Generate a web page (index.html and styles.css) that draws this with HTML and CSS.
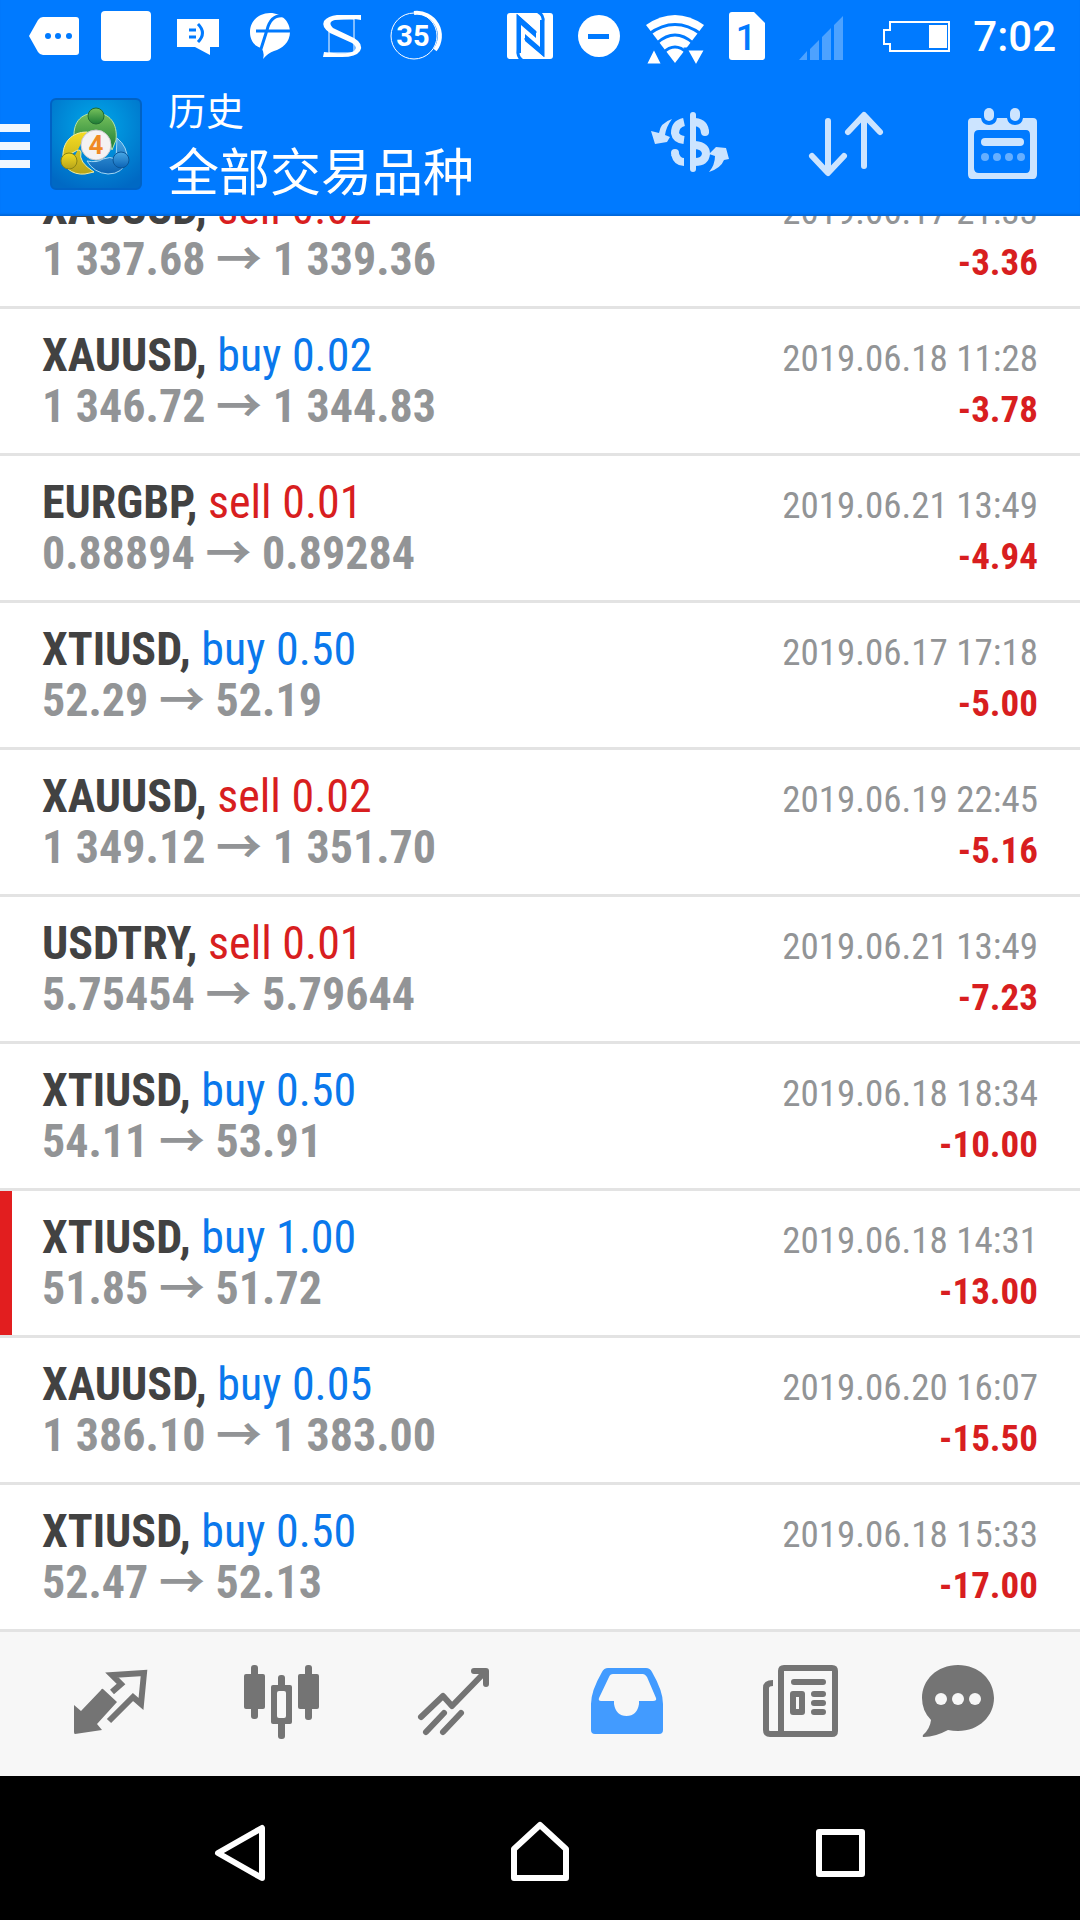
FILE: index.html
```html
<!DOCTYPE html>
<html lang="zh-CN">

<head>
    <meta charset="UTF-8">
    <meta name="viewport" content="width=device-width, initial-scale=1.0">
    <title>历史</title>

    <link rel="stylesheet" href="styles.css">
</head>

<body>
    <header class="header">
        <div class="status-bar">
            <div class="status-group">
                <!-- tag -->
                <svg class="status-icon" viewBox="0 0 72 72">
                    <path d="M11 36 20 20Q22 17 25 17H58Q61 17 61 20V52Q61 55 58 55H25Q22 55 20 52Z" />
                    <g class="cut"><circle cx="30" cy="36" r="3" /><circle cx="40" cy="36" r="3" /><circle cx="51" cy="36" r="3" /></g>
                </svg>
                <svg class="status-icon" viewBox="0 0 72 72">
                    <rect x="11" y="11" width="50" height="50" rx="4" />
                </svg>
                <!-- message -->
                <svg class="status-icon" viewBox="0 0 72 72">
                    <path d="M15 19H57V47H48V55L33 47H15Z" />
                    <path class="cut-line" d="M27 30H34M27 37H34M36 24Q45 33 36 42" />
                </svg>
                <svg class="status-icon" viewBox="0 0 72 72">
                    <path d="M36 13C48 13 56 22 56 32C56 42 48 49 40 51Q34 53 29 59Q31 52 27 48C20 46 16 40 16 32C16 21 25 13 36 13Z" />
                    <path class="cut-line" d="M50 16Q37 14 33 30L26 52M22 31H56" />
                </svg>
                <!-- s -->
                <svg class="status-icon" viewBox="0 0 72 72">
                    <path class="thin" d="M23 19H48V53H23Z" />
                    <path d="M55 15V20Q47 18 29 20Q21 22 27 28L48 38Q58 44 54 51Q50 57 36 57H17L18 52Q42 55 48 51Q52 47 46 43L24 33Q15 27 18 21Q22 16 31 15Z" />
                </svg>
                <svg class="status-icon" viewBox="0 0 72 72">
                    <circle class="thin" cx="36" cy="36" r="23" />
                    <path class="ring" d="M36 13A23 23 0 0 1 57 50" />
                    <text x="35" y="46" text-anchor="middle" class="ring-text">35</text>
                </svg>
            </div>
            <div class="status-group">
                <!-- nfc -->
                <svg class="status-icon" viewBox="0 0 72 72">
                    <rect x="13" y="13" width="46" height="46" rx="3" />
                    <path class="cut-line" d="M28 60Q23 57 24 49V17L42 33M44 12Q50 15 49 22V54L31 38" />
                    <path class="cut" d="M23 14 42 31V38L27 25V53H23ZM50 57 31 41V34L46 47V20H50Z" />
                </svg>
                <svg class="status-icon" viewBox="0 0 72 72">
                    <circle cx="33" cy="36" r="21" />
                    <path class="cut" d="M22 34H43V39H22Z" />
                </svg>
                <!-- wifi -->
                <svg class="status-icon" viewBox="0 0 72 72">
                    <path d="M37 63 8 25Q37 5 66 25Z" />
                    <path class="cut-line" d="M11 34Q37 15 63 34M19 43Q37 27 55 43M25 53Q37 41 49 53" />
                    <path class="tri" d="M7 65 16 47 25 65ZM48 49H68L58 67Z" />
                </svg>
                <svg class="status-icon" viewBox="0 0 72 72">
                    <path d="M22 12H44L55 23V57Q55 60 52 60H22Q19 60 19 57V15Q19 12 22 12Z" />
                    <text x="36" y="50" text-anchor="middle" class="sim-text">1</text>
                </svg>
                <svg class="status-icon signal" viewBox="0 0 72 72">
                    <path d="M17 60 25 51V60ZM28 49 37 40V60H28ZM40 37 49 28V60H40ZM52 25 61 16V60H52Z" />
                </svg>
                <!-- battery -->
                <svg class="battery" viewBox="0 0 72 36">
                    <path class="battery-line" d="M10 4H69V33H10V26H4V12H10Z" />
                    <rect x="49" y="7" width="18" height="23" />
                </svg>
                <span class="time">7:02</span>
            </div>
        </div>

        <div class="app-bar">
            <button class="menu" aria-label="菜单"><span></span><span></span><span></span></button>
            <svg class="logo" viewBox="0 0 92 92">
                <defs>
                    <radialGradient id="tile" cx="50%" cy="30%" r="75%">
                        <stop offset="0" stop-color="#00a9ea" />
                        <stop offset="1" stop-color="#0069c4" />
                    </radialGradient>
                    <linearGradient id="green" x2="0" y2="1">
                        <stop offset="0" stop-color="#78c25c" />
                        <stop offset="1" stop-color="#1d7c35" />
                    </linearGradient>
                    <linearGradient id="yellow" x2="0" y2="1">
                        <stop offset="0" stop-color="#f6dc20" />
                        <stop offset="1" stop-color="#b5a31b" />
                    </linearGradient>
                    <linearGradient id="blue" x2="0" y2="1">
                        <stop offset="0" stop-color="#4aa9e6" />
                        <stop offset="1" stop-color="#0a62b4" />
                    </linearGradient>
                </defs>
                <rect x="1" y="1" width="90" height="90" rx="5" fill="url(#tile)" stroke="#0062c4" stroke-width="2" />
                <path d="M24 40C23 22 33 15 46 15S68 25 66 42L62 52Q59 40 53 34H38Z" fill="url(#green)" stroke="#b9e3a6" />
                <path d="M37 34C22 34 12 44 13 60L24 54Q30 50 31 54Q28 64 44 74L35 76Q25 77 18 71" fill="url(#yellow)" stroke="#f5eda0" />
                <path d="M67 40Q78 49 77 62Q73 76 58 76Q44 75 37 63Q47 65 53 61Q60 58 66 61Z" fill="url(#blue)" stroke="#a4d8f5" />
                <circle cx="46" cy="18" r="8" fill="url(#green)" stroke="#206b32" />
                <circle cx="19" cy="63" r="8" fill="url(#yellow)" stroke="#8a8414" />
                <circle cx="71" cy="62" r="8" fill="url(#blue)" stroke="#0b5597" />
                <circle cx="46" cy="47" r="15" fill="#f4f2f3" stroke="#c9c9cc" />
                <text x="46" y="56" text-anchor="middle" class="logo-text">4</text>
            </svg>
            <div class="titles">
                <h1>历史</h1>
                <p>全部交易品种</p>
            </div>
            <div class="actions">
                <button aria-label="货币">
                    <svg viewBox="0 0 84 84">
                        <path class="bar-line" d="M45 13V67" />
                        <path class="coin" d="M36 20Q27 22 27 31Q28 37 36 38M27 52Q29 60 36 60M47 20Q57 21 57 31M47 43Q58 44 58 52Q57 60 47 60" />
                        <circle class="bar-fill" cx="57" cy="30" r="4" />
                        <circle class="bar-fill" cx="27" cy="51" r="4" />
                        <path class="bar-fill" d="M24 17Q12 21 11 31L3 29 7 42 19 40 22 35 17 33Q18 25 24 17ZM61 70Q73 66 76 58L81 57 78 46 68 45 61 52 67 54Q67 63 61 70Z" />
                    </svg>
                </button>
                <button aria-label="排序">
                    <svg viewBox="0 0 84 84">
                        <path class="bar-line" d="M24 19V70M8 54 24 71 40 54M60 64V14M44 30 60 13 76 30" />
                    </svg>
                </button>
                <button aria-label="日期">
                    <svg viewBox="0 0 84 84">
                        <path class="bar-fill" fill-rule="evenodd" d="M12 16H21Q22 23 29 23T37 16H47Q48 23 55 23T63 16H73Q77 16 77 20V72Q77 77 73 77H12Q8 77 8 72V20Q8 16 12 16ZM19 28Q14 28 14 33V66Q14 71 19 71H66Q70 71 70 66V33Q70 28 66 28Z" />
                        <rect class="bar-fill" x="24" y="6" width="10" height="13" rx="5" />
                        <rect class="bar-fill" x="50" y="6" width="10" height="13" rx="5" />
                        <rect class="bar-fill" x="21" y="36" width="43" height="8" rx="4" />
                        <g class="dots"><circle cx="25" cy="55" r="4" /><circle cx="37" cy="55" r="4" /><circle cx="49" cy="55" r="4" /><circle cx="61" cy="55" r="4" /></g>
                    </svg>
                </button>
            </div>
        </div>
    </header>

    <!-- closed deals, scrolled down to the last one -->
    <ul class="deals">
        <li class="deal">
            <div class="line"><span><b>XAUUSD,</b> <span class="sell">sell 0.02</span></span><time>2019.06.17 21:33</time></div>
            <div class="line price"><span>1 337.68 <i>→</i> 1 339.36</span><span class="profit">-3.36</span></div>
        </li>
        <li class="deal">
            <div class="line"><span><b>XAUUSD,</b> <span class="buy">buy 0.02</span></span><time>2019.06.18 11:28</time></div>
            <div class="line price"><span>1 346.72 <i>→</i> 1 344.83</span><span class="profit">-3.78</span></div>
        </li>
        <li class="deal">
            <div class="line"><span><b>EURGBP,</b> <span class="sell">sell 0.01</span></span><time>2019.06.21 13:49</time></div>
            <div class="line price"><span>0.88894 <i>→</i> 0.89284</span><span class="profit">-4.94</span></div>
        </li>
        <li class="deal">
            <div class="line"><span><b>XTIUSD,</b> <span class="buy">buy 0.50</span></span><time>2019.06.17 17:18</time></div>
            <div class="line price"><span>52.29 <i>→</i> 52.19</span><span class="profit">-5.00</span></div>
        </li>
        <li class="deal">
            <div class="line"><span><b>XAUUSD,</b> <span class="sell">sell 0.02</span></span><time>2019.06.19 22:45</time></div>
            <div class="line price"><span>1 349.12 <i>→</i> 1 351.70</span><span class="profit">-5.16</span></div>
        </li>
        <li class="deal">
            <div class="line"><span><b>USDTRY,</b> <span class="sell">sell 0.01</span></span><time>2019.06.21 13:49</time></div>
            <div class="line price"><span>5.75454 <i>→</i> 5.79644</span><span class="profit">-7.23</span></div>
        </li>
        <li class="deal">
            <div class="line"><span><b>XTIUSD,</b> <span class="buy">buy 0.50</span></span><time>2019.06.18 18:34</time></div>
            <div class="line price"><span>54.11 <i>→</i> 53.91</span><span class="profit">-10.00</span></div>
        </li>
        <li class="deal marked">
            <div class="line"><span><b>XTIUSD,</b> <span class="buy">buy 1.00</span></span><time>2019.06.18 14:31</time></div>
            <div class="line price"><span>51.85 <i>→</i> 51.72</span><span class="profit">-13.00</span></div>
        </li>
        <li class="deal">
            <div class="line"><span><b>XAUUSD,</b> <span class="buy">buy 0.05</span></span><time>2019.06.20 16:07</time></div>
            <div class="line price"><span>1 386.10 <i>→</i> 1 383.00</span><span class="profit">-15.50</span></div>
        </li>
        <li class="deal">
            <div class="line"><span><b>XTIUSD,</b> <span class="buy">buy 0.50</span></span><time>2019.06.18 15:33</time></div>
            <div class="line price"><span>52.47 <i>→</i> 52.13</span><span class="profit">-17.00</span></div>
        </li>
    </ul>

    <nav class="tabs">
        <button aria-label="行情">
            <svg viewBox="0 0 96 96">
                <path d="M41 33 55 46 35 68 40 74 13 78Q12 78 12 76V49L19 55 39 34Q40 32 41 33Z" />
                <path class="stroke" d="M50 36 59 28 50 19 82 17 79 48 71 41 47 65" />
            </svg>
        </button>
        <button aria-label="图表">
            <svg viewBox="0 0 96 96">
                <rect x="10" y="18" width="21" height="35" rx="2" />
                <rect x="17" y="9" width="7" height="54" rx="3" />
                <rect x="64" y="18" width="21" height="35" rx="2" />
                <rect x="71" y="9" width="7" height="55" rx="3" />
                <rect x="44" y="19" width="7" height="64" rx="3" />
                <rect x="37" y="29" width="21" height="39" rx="2" />
                <rect class="hole" x="43" y="35" width="9" height="27" rx="2" />
            </svg>
        </button>
        <button aria-label="交易">
            <svg viewBox="0 0 96 96">
                <path class="stroke trend" d="M15 61 37 40 46 50 79 16M68 15H80V28M38 57 20 76M55 57 37 76" />
            </svg>
        </button>
        <button class="active" aria-label="历史">
            <svg viewBox="0 0 96 96">
                <path fill-rule="evenodd" d="M30 12H68Q72 12 74 16Q85 35 85 48V74Q85 78 81 78H17Q13 78 13 74V48Q13 35 24 16Q26 12 30 12ZM35 18Q32 18 31 21L21 42Q20 45 23 45H36V48Q38 60 48.500 60T61 48V45H75Q79 45 78 42L69 21Q67 18 65 18Z" />
            </svg>
        </button>
        <button aria-label="新闻">
            <svg viewBox="0 0 96 96">
                <path class="stroke" d="M34 12H82Q85 12 85 15V75Q85 78 82 78H20Q16 78 16 74V32Q16 27 23 27M31 78V15Q31 12 34 12" />
                <path class="stroke round" d="M44 26H73M64 38H73M64 47H73M64 56H73" />
                <rect x="40" y="35" width="15" height="24" rx="3" />
                <rect class="hole" x="46" y="41" width="3" height="12" />
            </svg>
        </button>
        <button aria-label="消息">
            <svg viewBox="0 0 96 96">
                <path d="M36 9C57 9 72 24 72 42S57 75 36 75Q31 75 26 74Q13 81 2 81Q0 81 1 79Q8 73 9 64Q0 55 0 42C0 24 15 9 36 9Z" />
                <circle class="hole" cx="19" cy="43" r="6" />
                <circle class="hole" cx="36" cy="43" r="6" />
                <circle class="hole" cx="53" cy="43" r="6" />
            </svg>
        </button>
    </nav>

    <div class="system-bar">
        <button aria-label="返回"><svg viewBox="0 0 72 72"><path d="M14 41 58 16V66Z" /></svg></button>
        <button aria-label="主屏幕"><svg viewBox="0 0 72 72"><path d="M10 66V37L36 13 62 37V66Z" /></svg></button>
        <button aria-label="最近"><svg viewBox="0 0 72 72"><path d="M15 20H58V62H15Z" /></svg></button>
    </div>
</body>

</html>
```
FILE: styles.css
```css
* {
    box-sizing: border-box;
    margin: 0;
    padding: 0;
}

body {
    display: flex;
    flex-direction: column;
    height: 100vh;
    background-color: #fff;
    font-family: "Roboto Condensed", Roboto, "Noto Sans CJK SC", sans-serif;
}

button {
    border: none;
    background: none;
    cursor: pointer;
}

svg {
    display: block;
}

/* header */
.header {
    flex: none;
    background-color: #007aff;
    color: #fff;
    box-shadow: inset 0 -3px 2px -1px #0068db;
}

.status-bar {
    display: flex;
    justify-content: space-between;
    height: 72px;
    padding: 0 24px 0 18px;
}

.status-group {
    display: flex;
    align-items: center;
}

.status-icon {
    width: 72px;
    height: 72px;
    fill: #fff;
}

.cut {
    fill: #007aff;
}

.cut-line {
    fill: none;
    stroke: #007aff;
    stroke-width: 3;
}

.thin {
    fill: none;
    stroke: #fff;
    stroke-width: 1;
}

.ring {
    fill: none;
    stroke: #fff;
    stroke-width: 4;
}

.tri {
    stroke: #007aff;
    stroke-width: 3;
}

.ring-text {
    font: bold 29px Roboto, sans-serif;
}

.sim-text {
    font: 500 36px Roboto, sans-serif;
    fill: #007aff;
}

.signal {
    fill: #4da2ff;
}

.battery {
    width: 72px;
    height: 36px;
    margin-left: 26px;
    fill: #fff;
}

.battery-line {
    fill: none;
    stroke: #fff;
    stroke-width: 2;
}

.time {
    margin-left: 21px;
    font: 500 42px Roboto, sans-serif;
}

.app-bar {
    display: flex;
    align-items: center;
    height: 144px;
}

.menu {
    display: flex;
    flex-direction: column;
    gap: 10px;
    width: 30px;
    padding-top: 4px;
}

.menu span {
    height: 8px;
    background-color: #f0f7ff;
}

.logo {
    width: 92px;
    height: 92px;
    margin: 0 26px 0 20px;
}

.logo-text {
    font: bold 26px Roboto, sans-serif;
    fill: #f08a24;
}

.titles {
    flex: 1;
    padding-bottom: 4px;
    font-family: "Noto Sans CJK SC", sans-serif;
}

.titles h1 {
    font-size: 38px;
    font-weight: 400;
    line-height: 54px;
}

.titles p {
    font-size: 51px;
    font-weight: 400;
    line-height: 66px;
}

.actions {
    display: flex;
}

.actions button {
    display: flex;
    justify-content: center;
    align-items: center;
    width: 156px;
    height: 144px;
}

.actions svg {
    width: 84px;
    height: 84px;
}

.bar-line {
    fill: none;
    stroke: #cce4ff;
    stroke-width: 6;
    stroke-linecap: round;
    stroke-linejoin: round;
}

.coin {
    fill: none;
    stroke: #cce4ff;
    stroke-width: 8;
}

.bar-fill {
    fill: #cce4ff;
}

.dots {
    fill: #66afff;
}

/* deals */
.deals {
    display: flex;
    flex: 1;
    flex-direction: column;
    justify-content: flex-end;
    min-height: 0;
    overflow: hidden;
    list-style: none;
}

.deal {
    flex: none;
    padding: 21px 42px;
    border-bottom: 3px solid #e3e3e3;
    font-size: 46px;
    line-height: 51px;
}

.marked {
    box-shadow: inset 12px 0 #e21e1f;
}

.line {
    display: flex;
    justify-content: space-between;
    align-items: baseline;
    height: 51px;
}

.line b {
    color: #424242;
}

.buy {
    color: #0a78ec;
}

.sell {
    color: #d81e20;
}

.line time {
    color: #929496;
    font-size: 37px;
}

.price {
    color: #929496;
    font-weight: bold;
}

.price i {
    font-family: "Noto Sans CJK SC", sans-serif;
    font-style: normal;
    line-height: 0;
}

.profit {
    color: #d81e20;
    font-size: 37px;
}

/* bottom tabs */
.tabs {
    display: flex;
    flex: none;
    padding: 0 24px;
    background-color: #f7f7f7;
}

.tabs button {
    display: flex;
    flex: 1;
    justify-content: center;
    align-items: center;
    height: 144px;
}

.tabs svg {
    width: 96px;
    height: 96px;
    fill: #747474;
}

.tabs .active svg {
    fill: #429bff;
}

.tabs .stroke {
    fill: none;
    stroke: #747474;
    stroke-width: 6;
}

.tabs .trend,
.tabs .round {
    stroke-linecap: round;
    stroke-linejoin: round;
}

.tabs .hole {
    fill: #f7f7f7;
}

/* system buttons */
.system-bar {
    display: flex;
    flex: none;
    justify-content: center;
    background-color: #000;
}

.system-bar button {
    display: flex;
    justify-content: center;
    align-items: center;
    width: 300px;
    height: 144px;
}

.system-bar svg {
    width: 72px;
    height: 72px;
    fill: none;
    stroke: #fff;
    stroke-width: 6;
    stroke-linejoin: round;
}
```
